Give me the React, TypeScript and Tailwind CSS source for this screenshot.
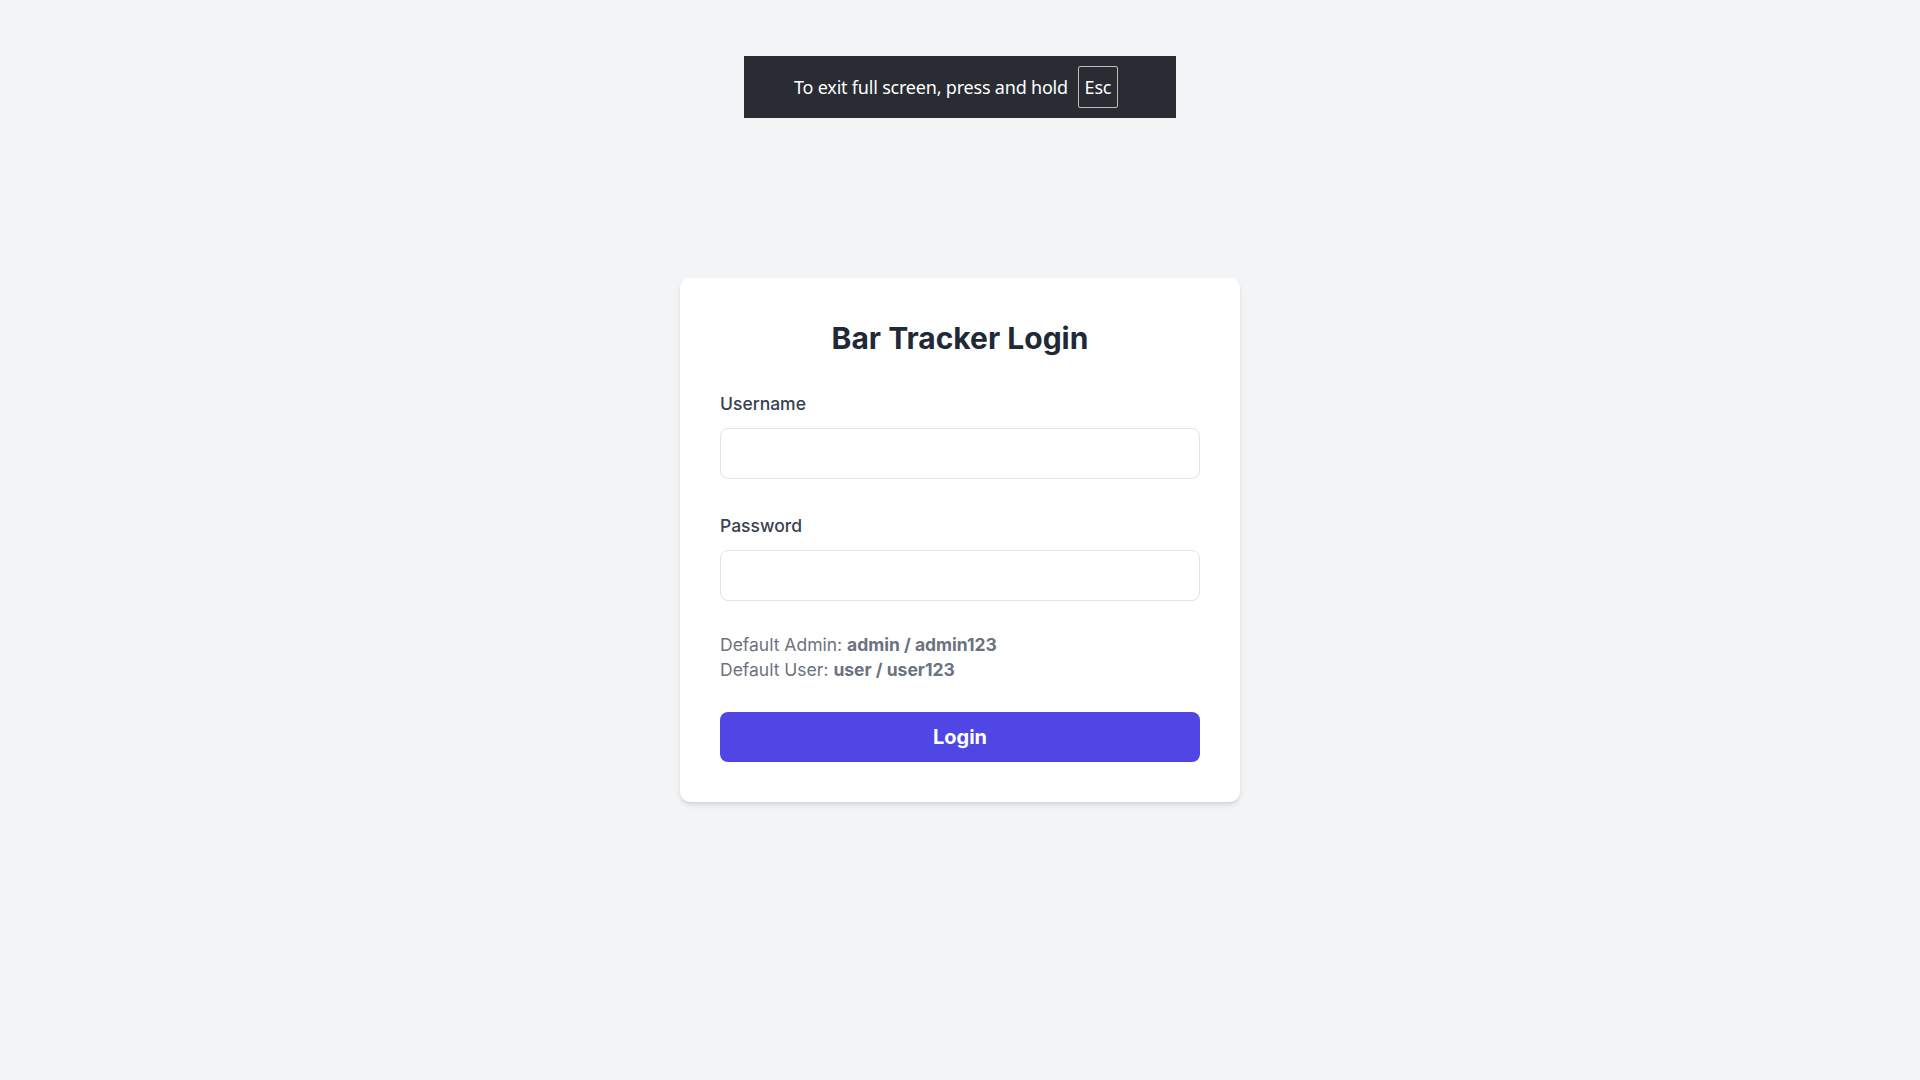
import React from "react";

export default function App() {
  return (
    <div className="relative min-h-screen bg-[#f3f4f6] flex items-center justify-center" style={{ fontFamily: "Inter, 'Noto Sans', sans-serif" }}>
      <div className="absolute top-[56px] left-1/2 -translate-x-1/2 w-[432px] h-[62px] bg-[#292c33] flex items-center pl-[50px]" style={{ fontFamily: "'Noto Sans', 'Open Sans', sans-serif" }}>
        <span className="text-white text-[18px] leading-[24px] tracking-[-0.2px]">To exit full screen, press and hold</span>
        <span className="ml-[10px] w-[40px] h-[42px] border border-[#bdbdbd] rounded-[2px] text-white text-[18px] tracking-[-0.2px] flex items-center justify-center">Esc</span>
      </div>

      <div className="w-[560px] bg-white rounded-[10px] shadow-md p-[40px]">
        <h1 className="text-center text-[30px] leading-[40px] font-bold text-[#1f2937] mb-[33px]">Bar Tracker Login</h1>

        <div className="mb-[34px]">
          <label className="block text-[17.5px] leading-[25px] font-medium text-[#374151] mb-[12px]">Username</label>
          <input type="text" className="block w-full h-[51px] rounded-[8px] border border-[#e3e4e6] bg-white px-4 outline-none" />
        </div>

        <div className="mb-[31px]">
          <label className="block text-[17.5px] leading-[25px] font-medium text-[#374151] mb-[12px]">Password</label>
          <input type="password" className="block w-full h-[51px] rounded-[8px] border border-[#e3e4e6] bg-white px-4 outline-none" />
        </div>

        <div className="mb-[30px] text-[17.5px] leading-[25px] text-[#6b7280]">
          <p>Default Admin: <span className="font-bold">admin / admin123</span></p>
          <p>Default User: <span className="font-bold">user / user123</span></p>
        </div>

        <button className="w-full h-[50px] rounded-[8px] bg-[#4f46e5] text-white text-[20px] font-bold">Login</button>
      </div>
    </div>
  );
}
